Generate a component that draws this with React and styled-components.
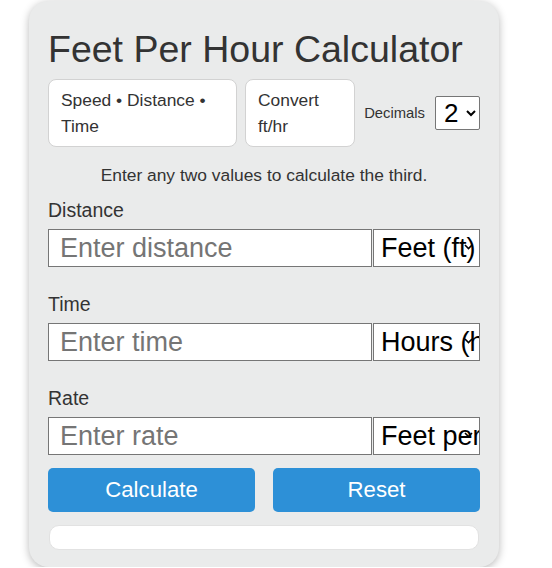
import React, {useState} from 'react';
import styled, {createGlobalStyle} from 'styled-components';

const GlobalStyle = createGlobalStyle`
	body {
		margin: 0;
		background: #ffffff;
		font-family: "Liberation Sans", Arial, sans-serif;
		color: #333333;
	}
	* { box-sizing: border-box; }
`;

const Card = styled.main`
	width: 470px;
	margin: 1px 0 0 29px;
	padding: 19px 19px 17px;
	border-radius: 20px;
	background-color: #eaebeb;
	box-shadow: 0 2px 8px rgba(0, 0, 0, 0.28);
`;

const Title = styled.h1`
	margin: 8px 0 8px;
	font-size: 37.5px;
	line-height: 43px;
	font-weight: normal;
	color: #333333;
`;

const TabRow = styled.nav`
	display: flex;
	align-items: center;
	gap: 8px;
`;

const TabBox = styled.a`
	width: ${props => props.width};
	padding: 7px 12px;
	border: 1px solid #d2d2d2;
	border-radius: 8px;
	background-color: #ffffff;
	font-size: 17.4px;
	line-height: 26px;
	color: #333333;
	text-decoration: none;
`;

const DecimalsGroup = styled.label`
	margin-left: auto;
	display: flex;
	align-items: center;
	gap: 10px;
	font-size: 14.8px;
	color: #333333;
`;

const DecimalsSelect = styled.select`
	width: 45px;
	height: 34px;
	font-size: 26px;
	font-family: "Liberation Sans", Arial, sans-serif;
	color: #000000;
	background: #ffffff;
	border: 1px solid #767676;
	border-radius: 2px;
	padding: 0 0 0 4px;
`;

const Hint = styled.p`
	margin: 18px 0 0;
	text-align: center;
	font-size: 17.4px;
	line-height: 20px;
`;

const Fields = styled.section`
	margin-top: 14px;
	display: flex;
	flex-direction: column;
	gap: 26px;
`;

const Field = styled.div`
	display: flex;
	flex-direction: column;
	gap: 8px;
`;

const Label = styled.label`
	font-size: 19.5px;
	line-height: 22px;
	color: #333333;
`;

const InputRow = styled.div`
	display: flex;
	gap: 1px;
`;

const TextInput = styled.input`
	flex: 1;
	min-width: 0;
	height: 38px;
	padding: 0 11px;
	border: 1px solid #767676;
	background: #ffffff;
	font-size: 27px;
	font-family: "Liberation Sans", Arial, sans-serif;
	color: #000000;

	::placeholder {
		color: #757575;
	}
`;

const SelectWrap = styled.div`
	position: relative;
	width: 107px;
	height: 38px;
`;

const UnitSelect = styled.select`
	appearance: none;
	width: 100%;
	height: 100%;
	padding: 0 0 0 7px;
	border: 1px solid #767676;
	border-radius: 0;
	background: #ffffff;
	font-size: 27px;
	font-family: "Liberation Sans", Arial, sans-serif;
	color: #000000;
`;

const Chevron = styled.svg`
	position: absolute;
	right: 7px;
	top: 15px;
	width: 9px;
	height: 6px;
	pointer-events: none;
`;

const ButtonRow = styled.div`
	margin-top: 13px;
	display: flex;
	gap: 18px;
`;

const Button = styled.button`
	flex: 1;
	height: 44px;
	border: none;
	border-radius: 5px;
	background-color: #2d90d7;
	color: #ffffff;
	font-size: 22.2px;
	font-family: "Liberation Sans", Arial, sans-serif;
	cursor: pointer;
`;

const Result = styled.output`
	display: block;
	margin: 13px 1px 0;
	height: 25px;
	border: 1px solid #e2e2e2;
	border-radius: 10px;
	background-color: #ffffff;
`;

const fields = [
	{name: 'distance', label: 'Distance', placeholder: 'Enter distance', units: ['Feet (ft)', 'Miles (mi)', 'Meters (m)']},
	{name: 'time', label: 'Time', placeholder: 'Enter time', units: ['Hours (hr)', 'Minutes (min)', 'Seconds (s)']},
	{name: 'rate', label: 'Rate', placeholder: 'Enter rate', units: ['Feet per hour (ft/hr)', 'Miles per hour (mph)']},
];

const App = () => {
	let [values, setValues] = useState({distance: '', time: '', rate: ''});
	let [decimals, setDecimals] = useState('2');

	return (
		<>
			<GlobalStyle />
			<Card>
				<Title>Feet Per Hour Calculator</Title>
				<TabRow>
					<TabBox width='189px' href='#sdt'>Speed • Distance • Time</TabBox>
					<TabBox width='110px' href='#convert'>Convert ft/hr</TabBox>
					<DecimalsGroup>
						Decimals
						<DecimalsSelect value={decimals} onChange={e => setDecimals(e.target.value)}>
							{['0', '1', '2', '3', '4'].map(d => <option key={d}>{d}</option>)}
						</DecimalsSelect>
					</DecimalsGroup>
				</TabRow>
				<Hint>Enter any two values to calculate the third.</Hint>
				<Fields>
					{fields.map(f => (
						<Field key={f.name}>
							<Label htmlFor={f.name}>{f.label}</Label>
							<InputRow>
								<TextInput
									id={f.name}
									type='text'
									placeholder={f.placeholder}
									value={values[f.name]}
									onChange={e => setValues({...values, [f.name]: e.target.value})}
								/>
								<SelectWrap>
									<UnitSelect>
										{f.units.map(u => <option key={u}>{u}</option>)}
									</UnitSelect>
									<Chevron viewBox='0 0 9 6'>
										<path d='M1 1 L4.5 4.5 L8 1' fill='none' stroke='#000' strokeWidth='1.6' />
									</Chevron>
								</SelectWrap>
							</InputRow>
						</Field>
					))}
				</Fields>
				<ButtonRow>
					<Button>Calculate</Button>
					<Button onClick={() => setValues({distance: '', time: '', rate: ''})}>Reset</Button>
				</ButtonRow>
				<Result />
			</Card>
		</>
	);
}

export default App;
